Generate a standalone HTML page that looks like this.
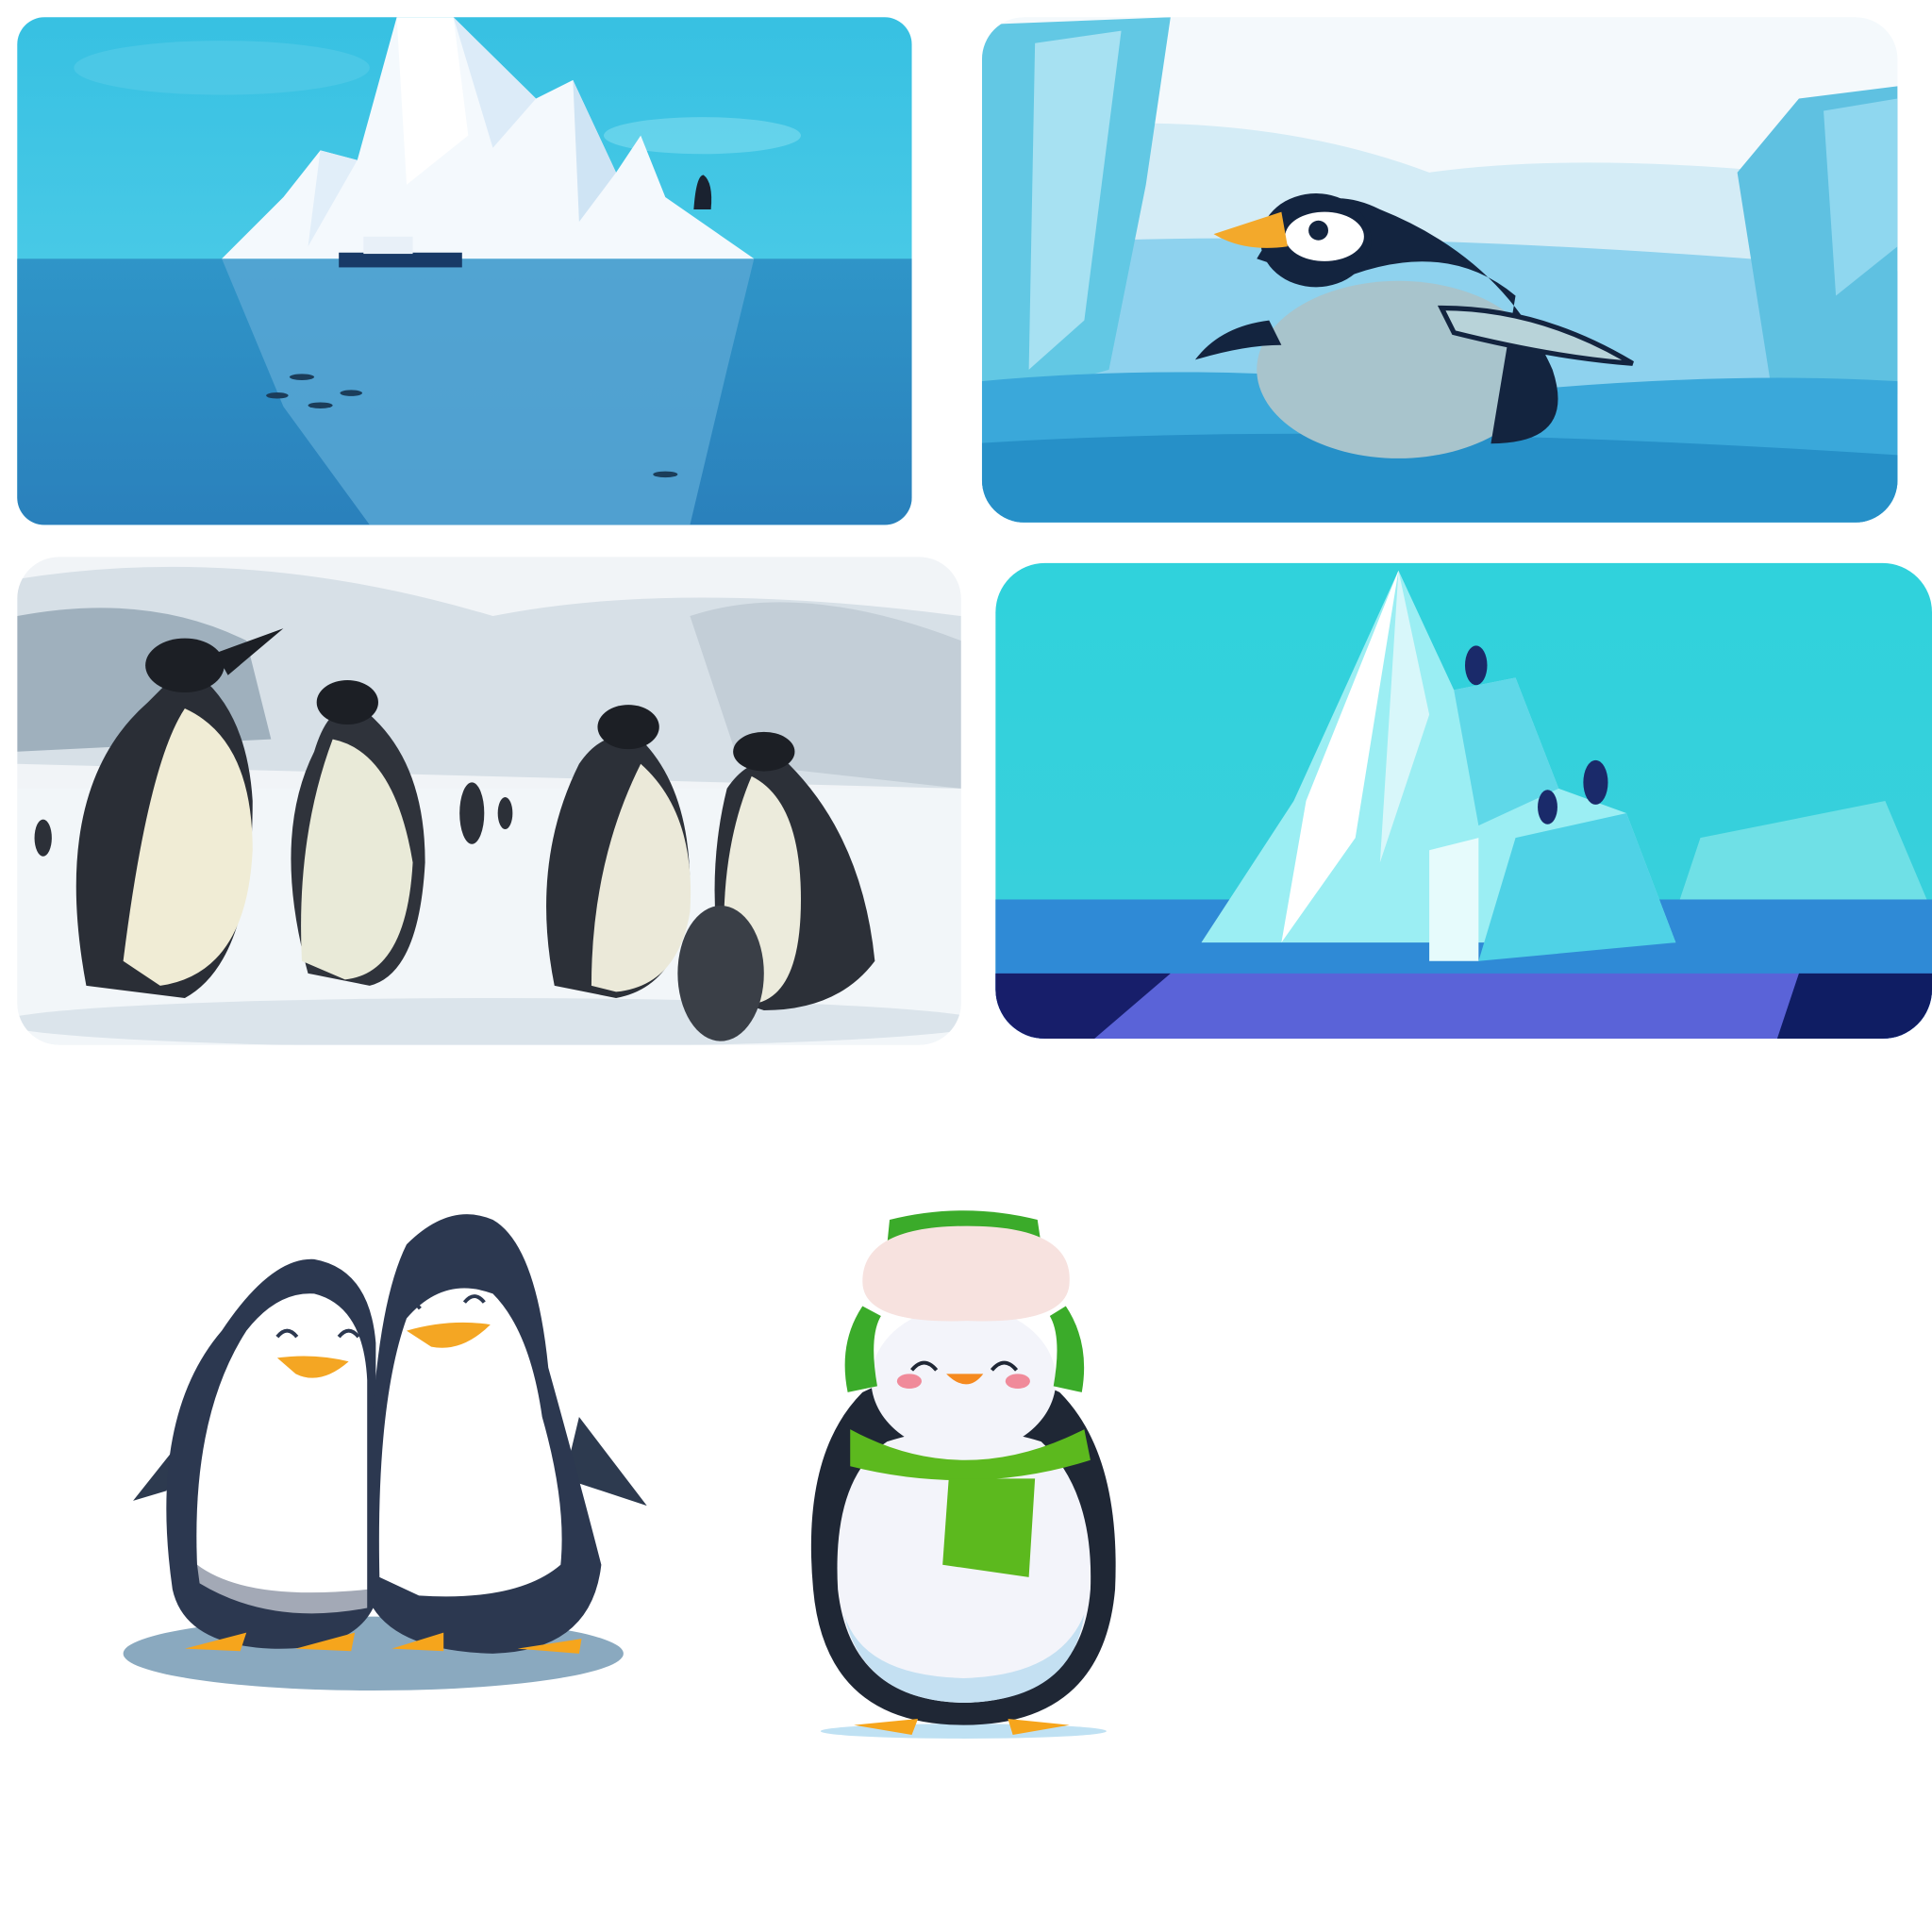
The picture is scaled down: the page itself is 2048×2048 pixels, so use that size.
<!DOCTYPE html>
<html><head><meta charset="utf-8"><style>html,body{margin:0;padding:0;background:#fff}svg{display:block}</style></head><body>
<svg width="2048" height="2048" viewBox="0 0 1568 1568" xmlns="http://www.w3.org/2000/svg">
<defs>
<clipPath id="c1"><rect x="14" y="14" width="726" height="412" rx="22"/></clipPath>
<clipPath id="c2"><rect x="797" y="14" width="743" height="410" rx="34"/></clipPath>
<clipPath id="c3"><rect x="14" y="452" width="766" height="396" rx="34"/></clipPath>
<clipPath id="c4"><rect x="808" y="457" width="760" height="386" rx="40"/></clipPath>
<linearGradient id="sky1" x1="0" y1="0" x2="0" y2="1"><stop offset="0" stop-color="#36c0e2"/><stop offset="1" stop-color="#5bd3ea"/></linearGradient>
<linearGradient id="sea1" x1="0" y1="0" x2="0" y2="1"><stop offset="0" stop-color="#2f95c8"/><stop offset="1" stop-color="#2a7fbb"/></linearGradient>
<linearGradient id="sky4" x1="0" y1="0" x2="0" y2="1"><stop offset="0" stop-color="#2fd2dc"/><stop offset="1" stop-color="#3ccfdc"/></linearGradient>
</defs>

<!-- Panel 1 -->
<g clip-path="url(#c1)">
<rect x="0" y="0" width="760" height="440" fill="url(#sky1)"/>
<ellipse cx="180" cy="55" rx="120" ry="22" fill="#52cbe7" opacity=".7"/>
<ellipse cx="570" cy="110" rx="80" ry="15" fill="#6ed6ec" opacity=".8"/>
<rect x="0" y="210" width="760" height="230" fill="url(#sea1)"/>
<polygon points="180,210 612,210 590,300 560,426 300,426 230,330" fill="#5aa8d4" opacity=".8"/>
<polygon points="180,210 230,160 260,122 290,130 322,14 368,14 435,80 465,65 500,140 520,110 540,160 612,210" fill="#f4f9fd"/>
<polygon points="322,14 368,14 380,110 330,150" fill="#ffffff"/>
<polygon points="368,14 435,80 400,120" fill="#dcebf8"/>
<polygon points="465,65 500,140 470,180" fill="#cfe4f4"/>
<polygon points="260,122 290,130 250,200" fill="#e1eef9"/>
<rect x="275" y="205" width="100" height="12" fill="#183a67"/>
<rect x="295" y="192" width="40" height="14" fill="#e8f0f8"/>
<path d="M563 170 q2 -28 8 -28 q8 6 6 28z" fill="#1a2230"/>
<g fill="#1b3d5a"><ellipse cx="245" cy="306" rx="10" ry="2.5"/><ellipse cx="285" cy="319" rx="9" ry="2.5"/><ellipse cx="225" cy="321" rx="9" ry="2.5"/><ellipse cx="260" cy="329" rx="10" ry="2.5"/><ellipse cx="540" cy="385" rx="10" ry="2.5"/></g>
</g>

<!-- Panel 2 -->
<g clip-path="url(#c2)">
<rect x="790" y="0" width="760" height="440" fill="#f4f9fc"/>
<path d="M790 110 Q1000 80 1160 140 Q1300 120 1540 150 L1540 440 L790 440Z" fill="#d4ecf6"/>
<path d="M790 200 Q1100 180 1540 220 L1540 440 L790 440Z" fill="#8ed2ee"/>
<path d="M797 20 L950 14 L930 150 L900 300 L797 330Z" fill="#62c8e4"/>
<path d="M840 35 L910 25 L880 260 L835 300Z" fill="#a7e1f2"/>
<path d="M1540 70 L1460 80 L1410 140 L1440 330 L1540 320Z" fill="#5fc1e1"/>
<path d="M1480 90 L1540 80 L1540 200 L1490 240Z" fill="#8fd7ef"/>
<path d="M790 310 Q1000 290 1200 320 Q1400 300 1550 310 L1550 440 L790 440Z" fill="#3aa8da"/>
<path d="M790 360 Q1100 340 1550 370 L1550 440 L790 440Z" fill="#2690c8"/>
<ellipse cx="1135" cy="300" rx="115" ry="72" fill="#a8c4cc"/>
<path d="M1020 210 Q1060 140 1120 170 Q1220 210 1260 300 Q1280 360 1210 360 L1230 240 Q1170 190 1080 230Z" fill="#13243f"/>
<path d="M1170 250 Q1250 250 1325 295 Q1260 290 1180 270Z" fill="#b8d3d9" stroke="#13243f" stroke-width="4"/>
<path d="M1030 260 Q990 265 970 292 Q1010 280 1040 280Z" fill="#13243f"/>
<ellipse cx="1068" cy="195" rx="45" ry="38" fill="#13243f"/>
<ellipse cx="1075" cy="192" rx="32" ry="20" fill="#fff"/>
<circle cx="1070" cy="187" r="8" fill="#13243f"/>
<path d="M985 190 L1040 172 L1045 200 Q1010 205 985 190Z" fill="#f3a92b"/>
</g>

<!-- Panel 3 -->
<g clip-path="url(#c3)">
<rect x="0" y="440" width="800" height="420" fill="#f1f4f7"/>
<path d="M14 470 Q200 440 400 500 Q550 470 780 500 L780 640 L14 620Z" fill="#d7e0e7"/>
<path d="M14 500 Q120 480 200 520 L220 600 L14 610Z" fill="#9fb0bd"/>
<path d="M560 500 Q650 470 780 520 L780 640 L600 620Z" fill="#c3ced7"/>
<rect x="14" y="640" width="766" height="210" fill="#f2f6f9"/>
<ellipse cx="400" cy="830" rx="400" ry="20" fill="#dbe4eb"/>
<g>
<path d="M70 800 Q40 640 120 570 L150 540 Q200 570 205 650 Q205 780 150 810Z" fill="#2a2e36"/>
<path d="M100 780 Q120 620 150 575 Q205 600 205 690 Q200 790 130 800Z" fill="#f0ecd5"/>
<ellipse cx="150" cy="540" rx="32" ry="22" fill="#1c1f25"/><path d="M175 530 L230 510 L185 548Z" fill="#1c1f25"/>
<path d="M250 790 Q220 680 255 610 Q270 560 300 580 Q345 620 345 700 Q340 790 300 800Z" fill="#2f333b"/>
<path d="M245 780 Q240 680 270 600 Q320 610 335 700 Q330 790 280 795Z" fill="#e9ead8"/>
<ellipse cx="282" cy="570" rx="25" ry="18" fill="#1c1f25"/>
<path d="M450 800 Q430 700 470 620 Q490 590 520 600 Q560 640 560 720 Q555 800 500 810Z" fill="#2c3038"/>
<path d="M480 800 Q480 700 520 620 Q565 660 560 740 Q550 800 500 805Z" fill="#ebe9d9"/>
<ellipse cx="510" cy="590" rx="25" ry="18" fill="#1c1f25"/>
<path d="M590 810 Q570 720 590 640 Q610 610 640 620 Q700 680 710 780 Q680 820 620 820Z" fill="#2c3038"/>
<path d="M590 800 Q580 700 610 630 Q650 650 650 730 Q650 810 610 815Z" fill="#ecebdc"/>
<ellipse cx="620" cy="610" rx="25" ry="16" fill="#1c1f25"/>
<ellipse cx="585" cy="790" rx="35" ry="55" fill="#3a3f47"/>
<ellipse cx="383" cy="660" rx="10" ry="25" fill="#2c3038"/>
<ellipse cx="35" cy="680" rx="7" ry="15" fill="#2c3038"/>
<ellipse cx="410" cy="660" rx="6" ry="13" fill="#2c3038"/>
</g>
</g>

<!-- Panel 4 -->
<g clip-path="url(#c4)">
<rect x="800" y="450" width="780" height="400" fill="url(#sky4)"/>
<polygon points="1380,680 1530,650 1568,740 1360,740" fill="#6fe0e6"/>
<rect x="800" y="730" width="780" height="120" fill="#2f8ad6"/>
<polygon points="800,790 1568,790 1568,850 800,850" fill="#5a63d8"/>
<polygon points="800,790 950,790 880,850 800,850" fill="#171e6a"/>
<polygon points="1460,790 1568,790 1568,850 1440,850" fill="#0f1d63"/>
<polygon points="975,765 1050,650 1135,463 1180,560 1230,550 1265,640 1320,660 1360,765" fill="#9beef3"/>
<polygon points="1135,463 1100,680 1040,765 1060,650" fill="#ffffff"/>
<polygon points="1135,463 1160,580 1120,700" fill="#d8f7fa"/>
<polygon points="1180,560 1230,550 1265,640 1200,670" fill="#5fd8e8"/>
<polygon points="1230,680 1320,660 1360,765 1200,780" fill="#4fd2e6"/>
<polygon points="1160,690 1200,680 1200,780 1160,780" fill="#e6fbfc"/>
<ellipse cx="1198" cy="540" rx="9" ry="16" fill="#1a2a6a"/>
<ellipse cx="1256" cy="655" rx="8" ry="14" fill="#1a2a6a"/>
<ellipse cx="1295" cy="635" rx="10" ry="18" fill="#1a2a6a"/>
</g>

<!-- Penguin couple -->
<ellipse cx="303" cy="1342" rx="203" ry="30" fill="#8aa9bf"/>
<path d="M135 1210 L108 1218 L170 1140 Z" fill="#2d3a4f"/>
<path d="M458 1200 L525 1222 L470 1150 Z" fill="#2d3a4f"/>
<path d="M140 1290 Q120 1150 180 1080 Q220 1020 255 1022 Q300 1030 305 1090 L305 1300 Q290 1340 220 1338 Q150 1335 140 1290Z" fill="#2c3850"/>
<path d="M160 1270 Q155 1150 200 1080 Q225 1048 255 1050 Q295 1060 298 1120 L298 1290 Q260 1305 190 1295Z" fill="#ffffff"/>
<path d="M160 1270 Q200 1300 298 1290 L298 1305 Q220 1320 162 1285Z" fill="#a3a9b6"/>
<path d="M300 1300 Q295 1080 330 1010 Q365 975 400 990 Q435 1010 445 1110 Q470 1200 488 1270 Q480 1340 400 1342 Q320 1340 300 1300Z" fill="#2c3850"/>
<path d="M308 1280 Q305 1140 330 1070 Q360 1035 400 1050 Q430 1080 440 1150 Q460 1220 455 1270 Q420 1300 340 1295Z" fill="#ffffff"/>
<path d="M225 1102 Q255 1098 283 1105 Q260 1125 240 1115Z" fill="#f4a623"/>
<path d="M330 1080 Q365 1070 398 1075 Q375 1098 350 1093Z" fill="#f4a623"/>
<g fill="none" stroke="#2c3850" stroke-width="3"><path d="M225 1085 q8 -10 16 0"/><path d="M275 1085 q8 -10 16 0"/><path d="M325 1062 q8 -10 16 0"/><path d="M377 1057 q8 -10 16 0"/></g>
<path d="M150 1338 L200 1325 L195 1340Z M240 1338 L288 1325 L285 1340Z M318 1338 L360 1325 L360 1340Z M420 1338 L472 1330 L470 1342Z" fill="#f6a51c"/>

<!-- Penguin with hat -->
<ellipse cx="782" cy="1405" rx="116" ry="6" fill="#bfe1f3"/>
<path d="M660 1290 Q650 1180 700 1130 Q780 1090 860 1130 Q910 1180 905 1290 Q895 1400 782 1400 Q670 1400 660 1290Z" fill="#1f2735"/>
<path d="M680 1290 Q675 1200 720 1170 Q782 1150 845 1170 Q888 1210 885 1290 Q878 1380 782 1382 Q690 1380 680 1290Z" fill="#f3f4fa"/>
<path d="M685 1310 Q700 1380 782 1382 Q870 1380 880 1310 Q860 1360 782 1362 Q700 1360 685 1310Z" fill="#c4e0f2"/>
<ellipse cx="782" cy="1120" rx="75" ry="60" fill="#f3f4fa"/>
<path d="M722 990 Q782 975 842 990 L845 1010 L720 1010Z" fill="#3bab2a"/>
<path d="M700 1040 Q700 995 785 995 Q870 995 868 1040 Q868 1075 785 1072 Q700 1075 700 1040Z" fill="#f7e2df"/>
<path d="M700 1060 Q680 1090 688 1130 L712 1125 Q705 1085 715 1068Z M865 1060 Q885 1090 878 1130 L855 1125 Q862 1085 852 1068Z" fill="#3bab2a"/>
<path d="M690 1160 Q782 1210 880 1160 L885 1185 Q790 1215 690 1190Z" fill="#5cb91e"/>
<path d="M770 1200 L840 1200 L835 1280 L765 1270Z" fill="#5cb91e"/>
<g fill="none" stroke="#1f2735" stroke-width="3"><path d="M740 1112 q10 -12 20 0"/><path d="M805 1112 q10 -12 20 0"/></g>
<ellipse cx="738" cy="1121" rx="10" ry="6" fill="#f08a9a"/><ellipse cx="826" cy="1121" rx="10" ry="6" fill="#f08a9a"/>
<path d="M768 1115 L798 1115 Q785 1132 768 1115Z" fill="#f58a1f"/>
<path d="M693 1400 L745 1395 L740 1408Z M818 1395 L868 1400 L822 1408Z" fill="#f6a51c"/>
</svg>
</body></html>
